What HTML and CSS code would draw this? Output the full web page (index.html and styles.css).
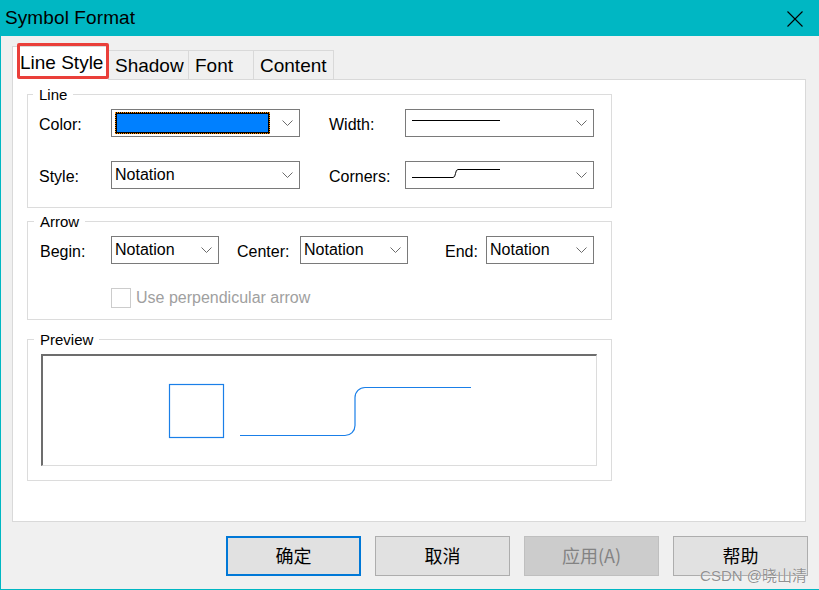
FILE: index.html
```html
<!DOCTYPE html>
<html>
<head>
<meta charset="utf-8">
<link rel="stylesheet" href="styles.css">
</head>
<body>
<div class="window">
  <div class="titlebar">
    <span class="title">Symbol Format</span>
    <svg class="close" width="16" height="16" viewBox="0 0 16 16"><path d="M0.5 0.5 L15.5 15.5 M15.5 0.5 L0.5 15.5" stroke="#000" stroke-width="1.1" fill="none"/></svg>
  </div>
  <div class="client">
    <div class="tabs">
      <div class="tab tab-selected tab-w1">Line Style<span class="annot"></span></div>
      <div class="tab tab-w2">Shadow</div>
      <div class="tab tab-w3">Font</div>
      <div class="tab tab-w4">Content</div>
    </div>
    <div class="panel">
      <div class="group group-line">
        <div class="group-title">Line</div>
        <div class="line-grid">
          <div class="lbl">Color:</div>
          <div class="combo combo-wide">
            <div class="swatch"><div class="swatch-fill"></div></div>
            <svg class="chev" width="11" height="6" viewBox="0 0 11 6"><polyline points="0.5,0.5 5.5,5.5 10.5,0.5" fill="none" stroke="#6b6b6b" stroke-width="1"/></svg>
          </div>
          <div class="lbl lbl-right">Width:</div>
          <div class="combo combo-wide">
            <svg class="sample" width="90" height="20" viewBox="0 0 90 20"><path d="M0 7.5 H88" stroke="#000" stroke-width="1"/></svg>
            <svg class="chev" width="11" height="6" viewBox="0 0 11 6"><polyline points="0.5,0.5 5.5,5.5 10.5,0.5" fill="none" stroke="#6b6b6b" stroke-width="1"/></svg>
          </div>
          <div class="lbl">Style:</div>
          <div class="combo combo-wide">
            <span class="combo-text">Notation</span>
            <svg class="chev" width="11" height="6" viewBox="0 0 11 6"><polyline points="0.5,0.5 5.5,5.5 10.5,0.5" fill="none" stroke="#6b6b6b" stroke-width="1"/></svg>
          </div>
          <div class="lbl lbl-right">Corners:</div>
          <div class="combo combo-wide">
            <svg class="sample" width="90" height="20" viewBox="0 0 90 20"><path d="M0 12.5 H41 Q43 12.5 43.5 8.5 Q44 4.5 46 4.5 H88" stroke="#000" stroke-width="1" fill="none"/></svg>
            <svg class="chev" width="11" height="6" viewBox="0 0 11 6"><polyline points="0.5,0.5 5.5,5.5 10.5,0.5" fill="none" stroke="#6b6b6b" stroke-width="1"/></svg>
          </div>
        </div>
      </div>

      <div class="group group-arrow">
        <div class="group-title">Arrow</div>
        <div class="arrow-row">
          <div class="lbl lbl-begin">Begin:</div>
          <div class="combo combo-small">
            <span class="combo-text">Notation</span>
            <svg class="chev" width="11" height="6" viewBox="0 0 11 6"><polyline points="0.5,0.5 5.5,5.5 10.5,0.5" fill="none" stroke="#6b6b6b" stroke-width="1"/></svg>
          </div>
          <div class="lbl lbl-center">Center:</div>
          <div class="combo combo-small">
            <span class="combo-text">Notation</span>
            <svg class="chev" width="11" height="6" viewBox="0 0 11 6"><polyline points="0.5,0.5 5.5,5.5 10.5,0.5" fill="none" stroke="#6b6b6b" stroke-width="1"/></svg>
          </div>
          <div class="lbl lbl-end">End:</div>
          <div class="combo combo-small">
            <span class="combo-text">Notation</span>
            <svg class="chev" width="11" height="6" viewBox="0 0 11 6"><polyline points="0.5,0.5 5.5,5.5 10.5,0.5" fill="none" stroke="#6b6b6b" stroke-width="1"/></svg>
          </div>
        </div>
        <div class="check-row">
          <span class="checkbox"></span>
          <span class="check-label">Use perpendicular arrow</span>
        </div>
      </div>

      <div class="group group-preview">
        <div class="group-title">Preview</div>
        <div class="preview-box">
          <svg width="553" height="109" viewBox="0 0 553 109">
            <rect x="126.5" y="28.5" width="54" height="53" fill="none" stroke="#1a7fe8" stroke-width="1.2"/>
            <path d="M197 79.5 H302 A10 10 0 0 0 312 69.5 V41.5 A10 10 0 0 1 322 31.5 H428" fill="none" stroke="#1a7fe8" stroke-width="1.2"/>
          </svg>
        </div>
      </div>
    </div>
    <div class="buttons">
      <div class="btn btn-default">确定</div>
      <div class="btn">取消</div>
      <div class="btn btn-disabled">应用(A)</div>
      <div class="btn">帮助</div>
    </div>
  </div>
  <div class="watermark">CSDN @晓山清</div>
</div>
</body>
</html>
```

FILE: styles.css
```css
* { box-sizing: border-box; }
html, body { margin: 0; padding: 0; }
body {
  width: 819px;
  height: 590px;
  overflow: hidden;
  font-family: "Liberation Sans", Arial, sans-serif;
  color: #000;
  background: #f0f0f0;
}
.window {
  position: relative;
  width: 819px;
  height: 590px;
  background: #f0f0f0;
  border-left: 1px solid #00b7c3;
  border-bottom: 1px solid #00b7c3;
}
.titlebar {
  height: 36px;
  background: #00b7c3;
  display: flex;
  align-items: center;
  justify-content: space-between;
  padding: 0 16px 0 4px;
}
.title {
  font-size: 19px;
  letter-spacing: 0.1px;
  margin-top: -1px;
}
.close { display: block; margin-top: 1px; }

.client {
  padding: 10px 0 0 11px;
}
.tabs {
  display: flex;
  align-items: flex-end;
  height: 33px;
}
.tab {
  font-size: 19px;
  height: 29px;
  line-height: 30px;
  padding-left: 6px;
  background: #f0f0f0;
  border: 1px solid #d9d9d9;
  border-bottom: none;
  margin-left: -1px;
  white-space: nowrap;
}
.tab-selected {
  position: relative;
  z-index: 2;
  height: 34px;
  margin-bottom: -1px;
  margin-left: 0;
  background: #fff;
  padding-left: 7px;
  line-height: 32px;
}
.tab-w1 { width: 97px; }
.tab-w2 { width: 81px; }
.tab-w3 { width: 66px; }
.tab-w4 { width: 81px; }
.annot {
  position: absolute;
  left: 4px;
  top: -4px;
  width: 92px;
  height: 36px;
  border: 3px solid #ea3f3a;
  border-radius: 2px;
}

.panel {
  width: 794px;
  height: 443px;
  background: #fff;
  border: 1px solid #d9d9d9;
  padding: 14px 0 0 14px;
}
.group {
  width: 585px;
  border: 1px solid #dcdcdc;
  padding-left: 12px;
}
.group-title {
  width: fit-content;
  margin: -9px 0 0 -6px;
  padding: 0 6px;
  background: #fff;
  font-size: 15px;
  line-height: 17px;
}
.group-line { padding-bottom: 18px; padding-left: 11px; }
.group-arrow { margin-top: 13px; padding-bottom: 11px; }
.group-preview { margin-top: 19px; padding-bottom: 14px; }

.line-grid {
  margin-top: 6px;
  display: grid;
  grid-template-columns: 72px 189px 105px 189px;
  row-gap: 24px;
  align-items: center;
}
.lbl {
  font-size: 16px;
  line-height: 18px;
  padding-top: 3px;
}
.lbl-right { padding-left: 29px; }

.combo {
  height: 28px;
  background: #fff;
  border: 1px solid #7a7a7a;
  display: flex;
  align-items: center;
  padding-left: 3px;
}
.combo-wide { width: 189px; }
.combo-small { width: 108px; }
.combo-text {
  flex: 1;
  font-size: 16px;
  line-height: 18px;
}
.chev {
  display: block;
  margin-left: auto;
  margin-right: 6px;
}
.swatch {
  width: 155px;
  height: 22px;
  border: 1px dotted #ff8c00;
  background: #000;
  padding: 1px;
}
.swatch-fill {
  width: 100%;
  height: 100%;
  background: #0080ff;
}
.sample {
  display: block;
  margin-left: 3px;
  margin-top: -1px;
}

.arrow-row {
  margin-top: 6px;
  display: flex;
  align-items: center;
}
.lbl-begin { width: 71px; }
.lbl-center { width: 63px; margin-left: 18px; }
.lbl-end { width: 41px; margin-left: 37px; }

.check-row {
  margin-top: 24px;
  margin-left: 71px;
  display: flex;
  align-items: center;
  height: 20px;
}
.checkbox {
  width: 20px;
  height: 20px;
  border: 1px solid #cccccc;
  background: #fff;
}
.check-label {
  margin-left: 5px;
  font-size: 16px;
  color: #a0a0a0;
}

.preview-box {
  width: 556px;
  height: 112px;
  margin-top: 6px;
  margin-left: 1px;
  border-top: 2px solid #6d6d6d;
  border-left: 2px solid #6d6d6d;
  border-right: 1px solid #dcdcdc;
  border-bottom: 1px solid #dcdcdc;
  background: #fff;
}
.preview-box svg { display: block; }

.buttons {
  margin-top: 14px;
  display: flex;
  justify-content: flex-end;
  gap: 14px;
  padding-right: 11px;
}
.btn {
  width: 135px;
  height: 40px;
  background: #e1e1e1;
  border: 1px solid #adadad;
  display: flex;
  align-items: center;
  justify-content: center;
  font-family: "Noto Sans CJK SC", "Liberation Sans", sans-serif;
  font-size: 18px;
  color: #000;
  padding-bottom: 2px;
}
.btn-default {
  border: 2px solid #0078d7;
}
.btn-disabled {
  background: #cccccc;
  border-color: #bfbfbf;
  color: #838383;
}
.watermark {
  position: absolute;
  right: 12px;
  bottom: 5px;
  font-family: "Liberation Sans", "Noto Sans CJK SC", sans-serif;
  font-size: 15px;
  line-height: 17px;
  color: rgba(110, 110, 110, 0.75);
  text-shadow: 0 0 1px #fff;
}
```
